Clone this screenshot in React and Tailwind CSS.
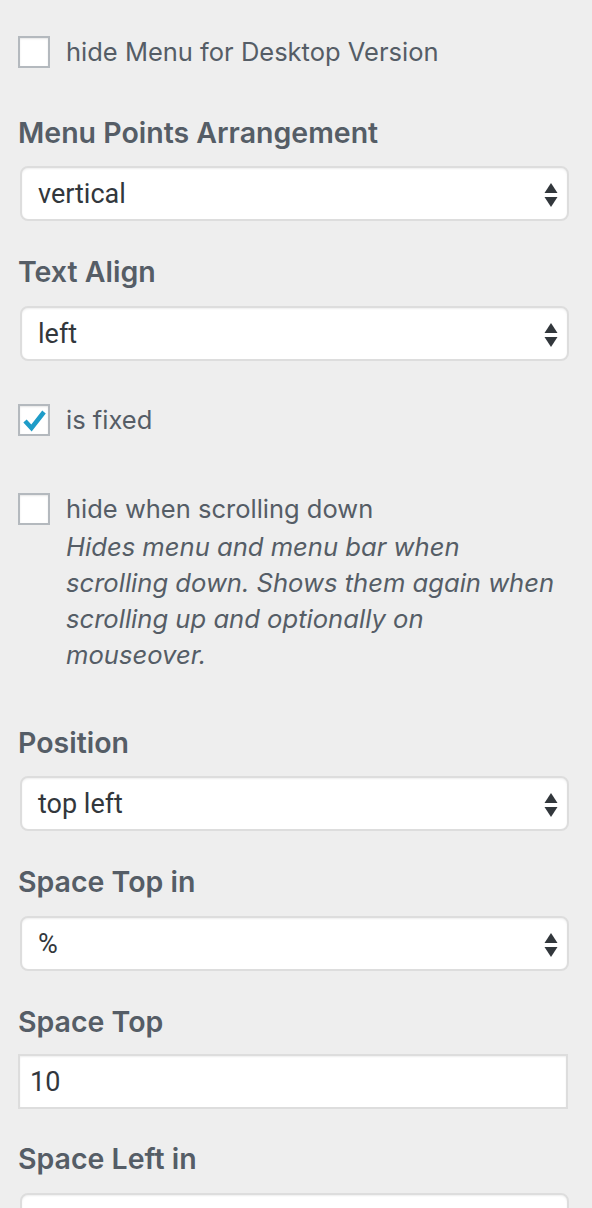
import React from "react";

const font = { fontFamily: "Inter, 'Noto Sans', sans-serif" };
const fieldFont = { fontFamily: "Roboto, 'Liberation Sans', sans-serif" };

function Arrows() {
  return (
    <svg width="14" height="26" viewBox="0 0 14 26" className="absolute right-[9px] top-[14px]">
      <path d="M7 1 L13.5 11 L0.5 11 Z" fill="#32373c" />
      <path d="M0.5 15 L13.5 15 L7 25 Z" fill="#32373c" />
    </svg>
  );
}

function Select({ value }) {
  return (
    <div className="relative ml-[2px] h-[55px] w-[549px] rounded-[8px] border-2 border-[#dddddd] bg-white shadow-[inset_0_1px_2px_rgba(0,0,0,0.07)]">
      <div style={fieldFont} className="pl-[16px] pt-[1px] text-[27px] leading-[51px] text-[#32373c]">{value}</div>
      <Arrows />
    </div>
  );
}

function Label({ children, className = "" }) {
  return (
    <div className={"text-[28.5px] font-semibold leading-[36px] text-[#555d66] " + className}>{children}</div>
  );
}

function Checkbox({ checked }) {
  return (
    <div className="relative h-[32px] w-[32px] shrink-0 border-2 border-[#b4b9be] bg-white shadow-[inset_0_1px_2px_rgba(0,0,0,0.1)]">
      {checked && (
        <svg width="26" height="22" viewBox="0 0 26 22" className="absolute left-[2px] top-[4px]">
          <path d="M3 11 L9.5 18 L22 2" fill="none" stroke="#1e9cc8" strokeWidth="4.5" strokeLinecap="butt" />
        </svg>
      )}
    </div>
  );
}

export default function App() {
  return (
    <div style={font} className="min-h-[1208px] w-[592px] overflow-hidden bg-[#eeeeee] pl-[18px]">
      <div className="flex items-center gap-[16px] pt-[36px]">
        <Checkbox />
        <span className="text-[25.5px] leading-[32px] text-[#555d66]">hide Menu for Desktop Version</span>
      </div>

      <Label className="mt-[47px]">Menu Points Arrangement</Label>
      <div className="mt-[15px]"><Select value="vertical" /></div>

      <Label className="mt-[33px]">Text Align</Label>
      <div className="mt-[16px]"><Select value="left" /></div>

      <div className="mt-[43px] flex items-center gap-[16px]">
        <Checkbox checked />
        <span className="text-[25.5px] leading-[32px] text-[#555d66]">is fixed</span>
      </div>

      <div className="mt-[57px] flex items-start gap-[16px]">
        <Checkbox />
        <div>
          <div className="text-[25.5px] leading-[32px] text-[#555d66]">hide when scrolling down</div>
          <div className="mt-[4px] w-[500px] text-[25.6px] italic leading-[36px] text-[#555d66]">
            Hides menu and menu bar when<br />
            scrolling down. Shows them again when<br />
            scrolling up and optionally on<br />
            mouseover.
          </div>
        </div>
      </div>

      <Label className="mt-[52px]">Position</Label>
      <div className="mt-[15px]"><Select value="top left" /></div>

      <Label className="mt-[33px]">Space Top in</Label>
      <div className="mt-[16px]"><Select value="%" /></div>

      <Label className="mt-[33px]">Space Top</Label>
      <div className="mt-[14px] h-[55px] w-[550px] border-2 border-[#dddddd] bg-white shadow-[inset_0_1px_2px_rgba(0,0,0,0.07)]">
        <div style={fieldFont} className="pl-[10px] pt-[1px] text-[27px] leading-[51px] text-[#32373c]">10</div>
      </div>

      <Label className="mt-[32px]">Space Left in</Label>
      <div className="mt-[16px]"><Select value="" /></div>
    </div>
  );
}
